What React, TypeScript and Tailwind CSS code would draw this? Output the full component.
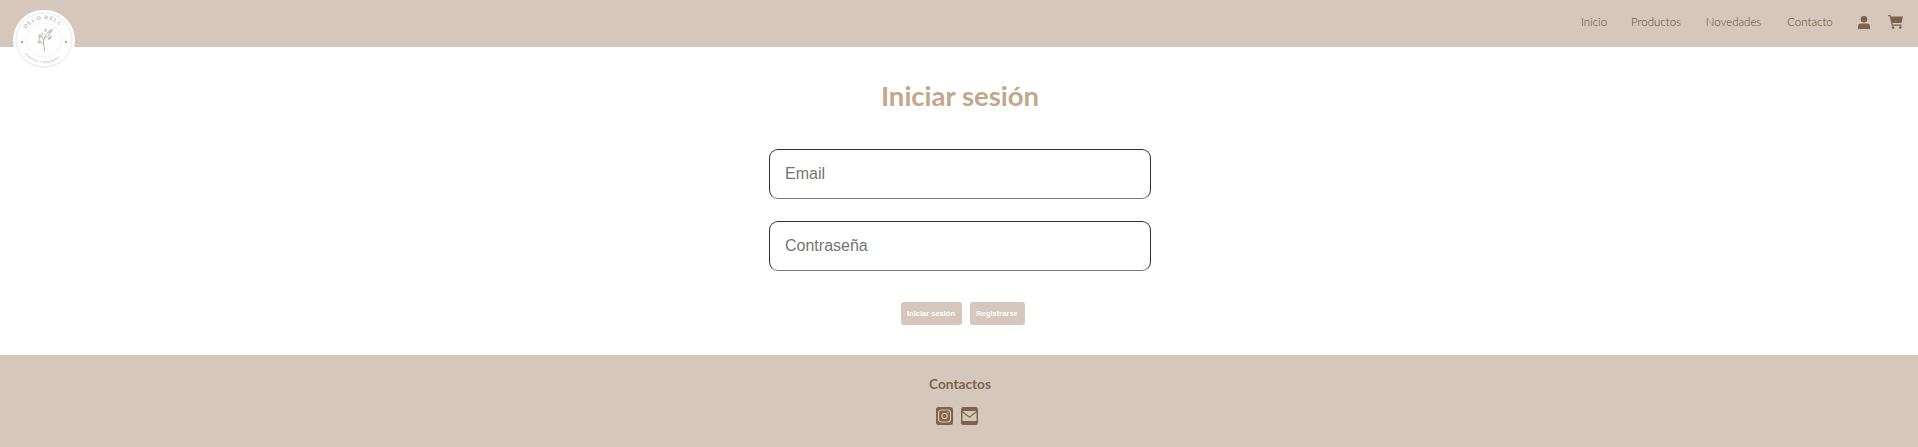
import React from "react";

const futura = "font-['Lato','Liberation_Sans',sans-serif]";

function Logo() {
  return (
    <div className="absolute left-[13px] top-[10px] w-[62px] h-[60px] rounded-full bg-white">
      <svg viewBox="0 0 62 62" preserveAspectRatio="none" className="w-full h-full">
        <circle cx="31" cy="31" r="28" fill="none" stroke="#e2ddd8" strokeWidth="0.8" />
        <circle cx="31" cy="31" r="17.5" fill="none" stroke="#ece9e5" strokeWidth="0.6" />
        <path id="t" d="M9.5 31a21.5 21.5 0 0 1 43 0" fill="none" />
        <text fontSize="5.6" fill="#9a938c" letterSpacing="1" fontFamily="Liberation Serif">
          <textPath href="#t" startOffset="18%">DECO BELL</textPath>
        </text>
        <path id="b" d="M7 31a24 24 0 0 0 48 0" fill="none" />
        <text fontSize="3.2" fill="#aaa49e" letterSpacing="0.4" fontFamily="Liberation Sans">
          <textPath href="#b" startOffset="20%">COSITAS Y REGALOS</textPath>
        </text>
        <circle cx="9" cy="33" r="1" fill="#97877a" />
        <circle cx="53" cy="33" r="1" fill="#97877a" />
        <path d="M31.500 42C31 37 29 32 33 25M30.500 35c-2-1-4-3-4-5M32 29c2-1 4-2 6-7M30.500 31c-2-2-2-5-1-7" fill="none" stroke="#b5afa8" strokeWidth="1" strokeLinecap="round" />
        <path d="M33 25l3-4 4-2-1 4zM27 24l-2 3 1 3 3-2zM35 28l4-2-1 4-3 1zM26 31l-2 2 2 2 2-2zM31 22l1-3 2 1-1 3z" fill="#cbc6c0" />
      </svg>
    </div>
  );
}

function UserIcon() {
  return (
    <svg viewBox="0 0 12 13" className="w-[12px] h-[13px]" fill="#7d634d">
      <circle cx="6" cy="3.300" r="3.300" />
      <path d="M3 7.500h6a3 3 0 0 1 3 3V13H0v-2.500a3 3 0 0 1 3-3z" />
    </svg>
  );
}

function CartIcon() {
  return (
    <svg viewBox="0 0 15 14" className="w-[15px] h-[14px]" fill="#7d634d">
      <path d="M0 0h2.500l.5 1.500h12l-1.500 6.500H4.500l.3 1.500h8.700v1.200H3.700L1.800 1.200H0z" />
      <circle cx="5" cy="12.600" r="1.300" />
      <circle cx="12.300" cy="12.600" r="1.300" />
    </svg>
  );
}

function InstagramIcon() {
  return (
    <svg viewBox="0 0 17 18" className="w-[17px] h-[18px]">
      <rect width="17" height="18" rx="2.500" fill="#7d634d" />
      <rect x="2.500" y="3" width="12" height="12" rx="3" fill="none" stroke="#d6c7bc" strokeWidth="1.200" />
      <circle cx="8.500" cy="9" r="2.700" fill="none" stroke="#d6c7bc" strokeWidth="1.200" />
      <circle cx="12" cy="5.500" r="0.700" fill="#d6c7bc" />
    </svg>
  );
}

function MailIcon() {
  return (
    <svg viewBox="0 0 17 18" className="w-[17px] h-[18px]">
      <rect width="17" height="18" rx="2.500" fill="#7d634d" />
      <path d="M1.500 4h14L8.500 9.500z" fill="#d6c7bc" />
      <path d="M1.500 5.400l7 5.500 7-5.500V14h-14z" fill="#d6c7bc" />
    </svg>
  );
}

const link = "whitespace-nowrap flex justify-center";
const field = "w-[382px] h-[50px] rounded-[9px] border border-[#333] border-b-[#777] px-[15px] text-[16px] placeholder:text-[#757575] outline-none";

export default function App() {
  return (
    <div className={`relative w-full min-h-[447px] flex flex-col bg-white ${futura}`}>
      <header className="h-[47px] bg-[#d6c7bc] flex items-start justify-end pt-[14px] pr-[15px] text-[#7d634d]">
        <Logo />
        <nav className="flex items-center gap-[25px] text-[11.5px] leading-[16px] font-light text-[#5f4836]">
          <a className={`${link} w-[26px]`}>Inicio</a>
          <a className={`${link} w-[48px]`}>Productos</a>
          <a className={`${link} w-[57px]`}>Novedades</a>
          <a className={`${link} w-[46px]`}>Contacto</a>
        </nav>
        <div className="flex items-center gap-[18px] ml-[25px] mt-[1px]">
          <UserIcon />
          <CartIcon />
        </div>
      </header>
      <main className="h-[308px] flex flex-col items-center pl-[2px]">
        <h1 className="mt-[33px] text-[27.5px] leading-[32px] font-bold text-[#c4a68c]">Iniciar sesión</h1>
        <form className="mt-[37px] flex flex-col items-center font-['Liberation_Sans',sans-serif]">
          <input placeholder="Email" className={field} />
          <input placeholder="Contraseña" className={`mt-[22px] ${field}`} />
          <div className="mt-[31px] flex gap-[8px] ml-[5px]">
            <button type="button" className="h-[23px] w-[61px] rounded-[3px] bg-[#d6c7bc] text-white text-[7.5px] font-bold">Iniciar sesión</button>
            <button type="button" className="h-[23px] w-[55px] rounded-[3px] bg-[#d6c7bc] text-white text-[7.5px] font-bold">Registrarse</button>
          </div>
        </form>
      </main>
      <footer className="h-[92px] bg-[#d6c7bc] flex flex-col items-center pl-[2px] text-[#7d634d]">
        <h2 className="mt-[20px] text-[13.7px] leading-[18px] font-bold">Contactos</h2>
        <div className="mt-[14px] flex gap-[8px] mr-[6px]">
          <InstagramIcon />
          <MailIcon />
        </div>
      </footer>
    </div>
  );
}
